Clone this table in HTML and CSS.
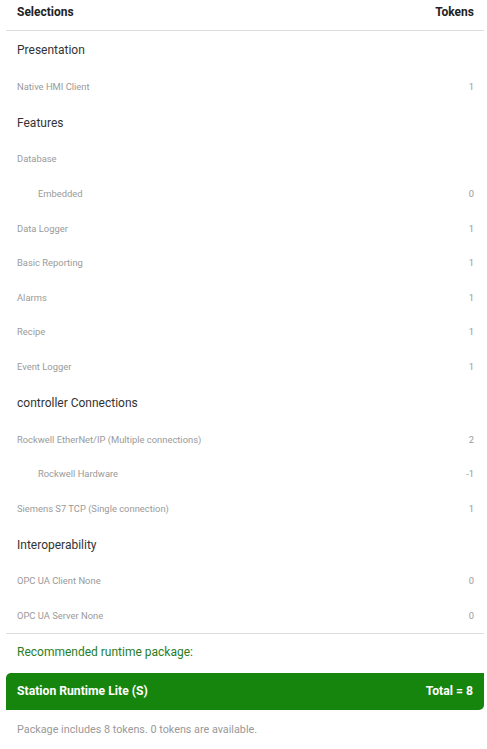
FILE: index.html
```html
<!DOCTYPE html>
<html>
<head>
<meta charset="utf-8">
<link rel="stylesheet" href="styles.css">
</head>
<body>
<div class="panel">
  <div class="head">
    <span>Selections</span>
    <span>Tokens</span>
  </div>
  <div class="list">
    <div class="section">Presentation</div>
    <div class="item"><span>Native HMI Client</span><span>1</span></div>
    <div class="section">Features</div>
    <div class="item"><span>Database</span><span></span></div>
    <div class="item sub"><span>Embedded</span><span>0</span></div>
    <div class="item"><span>Data Logger</span><span>1</span></div>
    <div class="item"><span>Basic Reporting</span><span>1</span></div>
    <div class="item"><span>Alarms</span><span>1</span></div>
    <div class="item"><span>Recipe</span><span>1</span></div>
    <div class="item"><span>Event Logger</span><span>1</span></div>
    <div class="section">controller Connections</div>
    <div class="item"><span>Rockwell EtherNet/IP (Multiple connections)</span><span>2</span></div>
    <div class="item sub"><span>Rockwell Hardware</span><span>-1</span></div>
    <div class="item"><span>Siemens S7 TCP (Single connection)</span><span>1</span></div>
    <div class="section">Interoperability</div>
    <div class="item"><span>OPC UA Client None</span><span>0</span></div>
    <div class="item"><span>OPC UA Server None</span><span>0</span></div>
  </div>
  <div class="rec">Recommended runtime package:</div>
  <div class="bar"><span>Station Runtime Lite (S)</span><span>Total = 8</span></div>
  <div class="note">Package includes 8 tokens. 0 tokens are available.</div>
</div>
</body>
</html>
```
FILE: styles.css
```css
html, body {
  margin: 0;
  padding: 0;
  background: #fff;
}
body {
  font-family: Roboto, "Liberation Sans", sans-serif;
}
.panel {
  padding: 0 3px 0 6px;
}
.head {
  display: flex;
  justify-content: space-between;
  align-items: center;
  height: 24px;
  padding: 0 10px 6px 11px;
  font-size: 12px;
  font-weight: 700;
  color: #222;
  border-bottom: 1px solid #dedede;
}
.list {
  border-bottom: 1px solid #dedede;
}
.section {
  height: 38px;
  display: flex;
  align-items: center;
  padding-left: 11px;
  font-size: 12px;
  color: #333;
}
.item {
  height: 34.6px;
  display: flex;
  align-items: center;
  justify-content: space-between;
  padding: 0 10px 0 11px;
  font-size: 9.4px;
  color: #9a9a9a;
}
.item.sub {
  padding-left: 32px;
}
.rec {
  height: 37px;
  display: flex;
  align-items: center;
  padding: 0 0 2px 11px;
  font-size: 12px;
  color: #2a7d1f;
}
.bar {
  height: 37px;
  display: flex;
  align-items: center;
  justify-content: space-between;
  padding: 0 11px 0 11px;
  background: #16850d;
  color: #fff;
  font-size: 12.2px;
  font-weight: 700;
  border-radius: 5px 0 5px 0;
}
.note {
  height: 38px;
  display: flex;
  align-items: center;
  padding: 1px 0 0 11px;
  font-size: 10.8px;
  color: #999;
}
```
